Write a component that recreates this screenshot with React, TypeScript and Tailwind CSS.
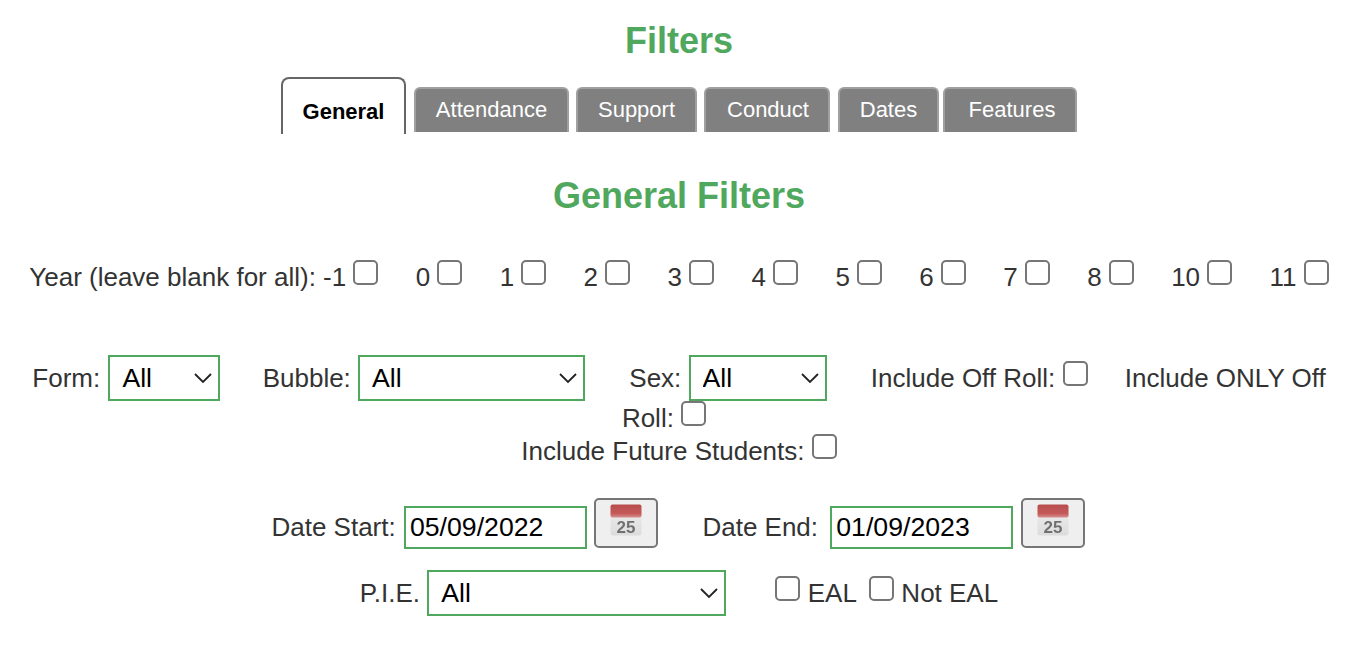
import React from "react";

const Box = ({ className = "" }: { className?: string }) => (
  <input
    type="checkbox"
    className={`appearance-none inline-block w-[25px] h-[25px] rounded-[5px] border-2 border-[#767676] bg-white align-[1px] ${className}`}
  />
);

const Select = ({ className }: { className: string }) => (
  <span className={`relative inline-block ${className}`}>
    <select className="appearance-none block w-full h-[46px] border-2 border-[#4fa85d] bg-white pl-[12px] text-[26.67px] text-black outline-none">
      <option>All</option>
    </select>
    <svg className="absolute right-[6px] top-[15px] w-[22px] h-[16px] pointer-events-none" viewBox="0 0 22 16" fill="none">
      <path d="M3 4 L11 12 L19 4" stroke="#222" strokeWidth="1.8" />
    </svg>
  </span>
);

const DateBox = ({ value, className = "" }: { value: string; className?: string }) => (
  <input
    readOnly
    value={value}
    className={`inline-block align-bottom w-[183px] h-[43px] border-2 border-[#4fa85d] bg-white pl-[4px] text-[26.67px] text-black outline-none ${className}`}
  />
);

const Calendar = ({ id }: { id: string }) => (
  <button className="inline-flex justify-center pt-[3px] mb-[1px] align-bottom w-[64px] h-[50px] rounded-[5px] border-2 border-[#767676] bg-[#efefef]">
    <svg width="34" height="34" viewBox="0 0 34 34">
      <defs>
        <filter id={`soft-${id}`}>
          <feGaussianBlur stdDeviation="0.7" />
        </filter>
        <linearGradient id={`red-${id}`} x1="0" y1="0" x2="0" y2="1">
          <stop offset="0" stopColor="#b84c4c" />
          <stop offset="0.7" stopColor="#c45a5a" />
          <stop offset="1" stopColor="#d89090" />
        </linearGradient>
        <linearGradient id={`page-${id}`} x1="0" y1="0" x2="0" y2="1">
          <stop offset="0" stopColor="#f0f0f0" />
          <stop offset="1" stopColor="#dcdcdc" />
        </linearGradient>
      </defs>
      <g filter={`url(#soft-${id})`}>
        <rect x="1.5" y="1.5" width="31" height="31" rx="3" fill={`url(#page-${id})`} />
        <rect x="1.5" y="1.5" width="31" height="13" rx="2" fill={`url(#red-${id})`} />
        <text x="17" y="30" textAnchor="middle" fontSize="17" fontWeight="700" fill="#707070" fontFamily="Liberation Sans, sans-serif">25</text>
      </g>
    </svg>
  </button>
);

const Tab = ({ label, className }: { label: string; className: string }) => (
  <div className={`h-[45px] rounded-t-[6px] border-2 border-b-0 border-[#a0a0a0] bg-[#808080] text-[22px] leading-[42px] text-white text-center ${className}`}>
    {label}
  </div>
);

const years = ["0", "1", "2", "3", "4", "5", "6", "7", "8", "10", "11"];

export default function App() {
  return (
    <div className="w-[1358px] bg-white text-center text-[26px] text-[#333] font-['Liberation_Sans',Arial,sans-serif] h-[650px] overflow-hidden">
      <h1 className="pt-[19px] text-[36px] leading-[44px] font-bold text-[#4fa85d]">Filters</h1>

      <div className="mt-[14px] flex justify-center items-end h-[57px]">
        <div className="mr-[8px] w-[125px] h-[57px] rounded-t-[8px] border-2 border-b-0 border-[#666] bg-white text-[22px] font-bold text-black leading-[66px]">
          General
        </div>
        <div className="flex items-start gap-[7px] h-[57px] pt-[10px]">
          <Tab label="Attendance" className="w-[155px]" />
          <Tab label="Support" className="w-[121px]" />
          <Tab label="Conduct" className="w-[126px] mr-[1px] pl-[2px]" />
          <Tab label="Dates" className="w-[101px] mr-[-3px]" />
          <Tab label="Features" className="w-[134px] pl-[4px]" />
        </div>
      </div>

      <h2 className="mt-[40px] text-[36px] leading-[44px] font-bold text-[#4fa85d]">General Filters</h2>

      <div className="mt-[37px] h-[44px] leading-[44px] whitespace-nowrap">
        Year (leave blank for all): -1 <Box className="mr-[30px]" />
        {years.map((y, i) => (
          <React.Fragment key={y}>
            {" "}
            {y} <Box className={i === years.length - 1 ? "" : "mr-[30px]"} />
          </React.Fragment>
        ))}
      </div>

      <div className="mt-[56px] leading-[33px]">
        <div className="mx-auto w-[1320px]">
          Form: <Select className="ml-[1px] w-[112px]" /> <span className="ml-[35px]">Bubble:</span> <Select className="w-[227px]" />{" "}
          <span className="ml-[37px]">Sex:</span> <Select className="w-[138px]" />{" "}
          <span className="ml-[37px]">Include Off Roll:</span> <Box className="mr-[30px]" /> <span>Include ONLY Off</span>{" "}
          <span>Roll:</span> <Box className="mr-[30px]" />
        </div>
        <div className="-mt-[1px]">
          Include Future Students: <Box />
        </div>
      </div>

      <div className="mt-[30px] pr-[2px] whitespace-nowrap leading-[43px]">
        Date Start: <DateBox className="ml-[1px]" value="05/09/2022" /> <Calendar id="a" /> <span className="ml-[37px]">Date End:</span>{" "}
        <DateBox value="01/09/2023" className="ml-[5px]" /> <Calendar id="b" />
      </div>

      <div className="mt-[21px] whitespace-nowrap">
        P.I.E. <Select className="w-[299px]" /> <Box className="ml-[42px]" /> EAL <Box className="ml-[6px]" /> Not EAL
      </div>
    </div>
  );
}
